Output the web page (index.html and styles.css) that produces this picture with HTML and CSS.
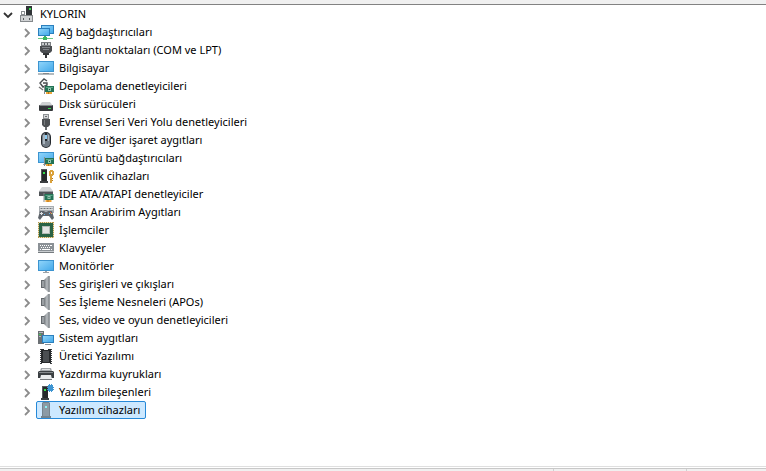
FILE: index.html
```html
<!DOCTYPE html>
<html lang="tr">

<head>
<meta charset="utf-8">
<title>Aygıt Yöneticisi</title>
<meta name="viewport" content="width=device-width, initial-scale=1">
<link rel="stylesheet" href="styles.css">
</head>

<body>

<!-- shared shapes -->
<svg class="defs" aria-hidden="true">
  <defs>
    <linearGradient id="screen" x1="0" y1="0" x2="1" y2="1">
      <stop offset="0" stop-color="#8fd4fa"/>
      <stop offset="1" stop-color="#45aaea"/>
    </linearGradient>
    <linearGradient id="metal" x1="0" y1="0" x2="1" y2="0">
      <stop offset="0" stop-color="#73787c"/>
      <stop offset=".6" stop-color="#b9bec2"/>
      <stop offset="1" stop-color="#83888c"/>
    </linearGradient>
    <symbol id="closed" viewBox="0 0 10 10"><path d="M3 1l4 4-4 4" fill="none" stroke="#8c8c8c" stroke-width="1.8"/></symbol>
    <symbol id="open" viewBox="0 0 10 10"><path d="M1 3l4 4 4-4" fill="none" stroke="#333" stroke-width="1.8"/></symbol>
    <symbol id="monitor" viewBox="0 0 16 16">
      <path d="M0 2h16v11H0z" fill="#3c94d0"/>
      <path d="M1 3h14v9H1z" fill="url(#screen)"/>
      <path d="M7 13h2v1H7zM5 14h6v1H5z" fill="#9da3a8"/>
    </symbol>
    <symbol id="card" viewBox="0 0 10 9">
      <path d="M0 0h1v9H0z" fill="#8a8d8f"/>
      <path d="M1 1h9v6H1z" fill="#237355"/>
      <path d="M2 2h7v1H2z" fill="#5aa587"/>
      <path d="M4 3h3v3H4z" fill="#8fc6ae"/>
      <path d="M5 4h1v1H5z" fill="#14503a"/>
      <path d="M2 7h6v2H2z" fill="#eda53a"/>
      <path d="M4 7h1v2H4z" fill="#b87719"/>
    </symbol>
    <symbol id="tower" viewBox="0 0 8 14">
      <path d="M1 0h6v12H1z" fill="#26292b"/>
      <path d="M1 0h6v1H1zM1 1h1v11H1z" fill="#55595c"/>
      <path d="M0 12h8v2H0z" fill="#3b3f42"/>
      <path d="M3 3h2v2H3z" fill="#36df4c"/>
    </symbol>
    <symbol id="speaker" viewBox="0 0 16 16">
      <path d="M3 4h4v8H3z" fill="#63686c"/>
      <path d="M4 5h2v6H4z" fill="#9a9fa3"/>
      <path d="M6 4l4-4h1v16h-1l-4-4z" fill="url(#metal)"/>
      <path d="M11 0h1v16h-1z" fill="#9a9fa3"/>
    </symbol>
  </defs>
</svg>

<div class="window">
  <div class="topbar"></div>

  <main>
    <ul class="tree">
      <li>
        <div class="row">
          <button class="toggle" aria-label="KYLORIN" aria-expanded="true"><svg><use href="#open"/></svg></button>
          <span class="item">
            <svg class="icon" viewBox="0 0 16 16">
              <path d="M7 0h6v9H7z" fill="#303437"/><path d="M10 2h2v2h-2z" fill="#36df4c"/>
              <path d="M2 5h4v4H2z" fill="#8a8e92"/><path d="M3 6h2v2H3z" fill="#fff"/>
              <path d="M1 9h13v7H1z" fill="#85898c"/>
              <path d="M2 10h11v5H2z" fill="#d0d2d4"/><path d="M4 12h1v2H4zM10 12h1v2h-1z" fill="#55595c"/>
            </svg>
            <span class="name">KYLORIN</span>
          </span>
        </div>

        <ul>
          <li class="row">
            <button class="toggle" aria-label="Ağ bağdaştırıcıları"><svg><use href="#closed"/></svg></button>
            <span class="item">
              <svg class="icon" viewBox="0 0 16 16">
                <path d="M3 1h13v9H3z" fill="#2b7fbd"/><path d="M4 2h11v7H4z" fill="url(#screen)"/>
                <path d="M0 4h12v8H0z" fill="#2b7fbd"/><path d="M1 5h10v6H1z" fill="url(#screen)"/>
                <path d="M0 14h15v1H0z" fill="#6fcb85"/><path d="M6 12h2v1H6zM5 13h4v3H5z" fill="#3cb460"/>
              </svg>
              <span class="name">Ağ bağdaştırıcıları</span>
            </span>
          </li>
          <li class="row">
            <button class="toggle" aria-label="Bağlantı noktaları (COM ve LPT)"><svg><use href="#closed"/></svg></button>
            <span class="item">
              <svg class="icon" viewBox="0 0 16 16">
                <path d="M3 0h10v4H3z" fill="#7b7f82"/><path d="M4 1h8v2H4z" fill="#c9ccce"/><path d="M6 1h1v2H6zM9 1h1v2H9z" fill="#55595c"/>
                <path d="M2 4h12v5l-2 2H4L2 9z" fill="#4a4d50"/><path d="M4 5h8v1H4zM5 7h6v1H5z" fill="#808488"/>
                <path d="M5 11h6v2H5zM7 13h2v3H7z" fill="#333638"/>
              </svg>
              <span class="name">Bağlantı noktaları (COM ve LPT)</span>
            </span>
          </li>
          <li class="row">
            <button class="toggle" aria-label="Bilgisayar"><svg><use href="#closed"/></svg></button>
            <span class="item">
              <svg class="icon" viewBox="0 0 16 16">
                <path d="M0 1h16v11H0z" fill="#3c94d0"/><path d="M1 2h14v9H1z" fill="url(#screen)"/>
                <path d="M0 13h16v2H0z" fill="#b4babe"/><path d="M5 13h6v1H5z" fill="#85898c"/>
              </svg>
              <span class="name">Bilgisayar</span>
            </span>
          </li>
          <li class="row">
            <button class="toggle" aria-label="Depolama denetleyicileri"><svg><use href="#closed"/></svg></button>
            <span class="item">
              <svg class="icon" viewBox="0 0 16 16">
                <path d="M9 3L6 1 2 5l3 4 4-2V5H5" fill="none" stroke="#484c4f" stroke-width="1.4"/>
                <path d="M1 9l4 3" stroke="#777" stroke-width="1.4"/>
                <use href="#card" x="6" y="7" width="10" height="9"/>
              </svg>
              <span class="name">Depolama denetleyicileri</span>
            </span>
          </li>
          <li class="row">
            <button class="toggle" aria-label="Disk sürücüleri"><svg><use href="#closed"/></svg></button>
            <span class="item">
              <svg class="icon" viewBox="0 0 16 16">
                <path d="M4 6h8l3 4H1z" fill="#cfd1d3"/><rect x="1" y="9" width="14" height="6" rx="1" fill="#34373a"/>
                <path d="M2 9h12v1H2z" fill="#85898c"/><path d="M10 12h3v1h-3z" fill="#36df4c"/>
              </svg>
              <span class="name">Disk sürücüleri</span>
            </span>
          </li>
          <li class="row">
            <button class="toggle" aria-label="Evrensel Seri Veri Yolu denetleyicileri"><svg><use href="#closed"/></svg></button>
            <span class="item">
              <svg class="icon" viewBox="0 0 16 16">
                <path d="M5 0h6v5H5z" fill="#8c9093"/><path d="M6 1h4v3H6z" fill="#d5d7d9"/><path d="M7 2h2v1H7z" fill="#6a6d70"/>
                <path d="M4 5h8v6l-2 2H6l-2-2z" fill="#4e5154"/><path d="M6 6h1v5H6z" fill="#777b7e"/>
                <path d="M7 13h2v3H7z" fill="#6a6d70"/>
              </svg>
              <span class="name">Evrensel Seri Veri Yolu denetleyicileri</span>
            </span>
          </li>
          <li class="row">
            <button class="toggle" aria-label="Fare ve diğer işaret aygıtları"><svg><use href="#closed"/></svg></button>
            <span class="item">
              <svg class="icon" viewBox="0 0 16 16">
                <rect x="3" y="0" width="10" height="16" rx="5" fill="#24282d"/>
                <rect x="4" y="1" width="8" height="14" rx="4" fill="#727c86"/>
                <path d="M5 3h2v9H5zM10 3h1v6h-1z" fill="#a9b4bd"/><path d="M7 1h2v8H7z" fill="#24282c"/><path d="M7 3h2v4H7z" fill="#8ccbf2"/>
              </svg>
              <span class="name">Fare ve diğer işaret aygıtları</span>
            </span>
          </li>
          <li class="row">
            <button class="toggle" aria-label="Görüntü bağdaştırıcıları"><svg><use href="#closed"/></svg></button>
            <span class="item">
              <svg class="icon" viewBox="0 0 16 16"><use href="#monitor"/><use href="#card" x="6" y="7" width="10" height="9"/></svg>
              <span class="name">Görüntü bağdaştırıcıları</span>
            </span>
          </li>
          <li class="row">
            <button class="toggle" aria-label="Güvenlik cihazları"><svg><use href="#closed"/></svg></button>
            <span class="item">
              <svg class="icon" viewBox="0 0 16 16">
                <use href="#tower" x="2" y="1" width="8" height="14"/>
                <path d="M11 3h1V2h3v1h1v4h-1v1h-1v7h-2V8h-1z" fill="#dba23b"/><path d="M13 4h1v2h-1z" fill="#fff"/>
                <path d="M14 10h1v1h-1zM14 12h1v1h-1z" fill="#b97b1a"/>
              </svg>
              <span class="name">Güvenlik cihazları</span>
            </span>
          </li>
          <li class="row">
            <button class="toggle" aria-label="IDE ATA/ATAPI denetleyiciler"><svg><use href="#closed"/></svg></button>
            <span class="item">
              <svg class="icon" viewBox="0 0 16 16">
                <path d="M4 1h8l3 4H1z" fill="#d3d5d7"/><path d="M1 5h14v5H1z" fill="#4f5356"/><path d="M1 5h14v1H1z" fill="#999da0"/>
                <use href="#card" x="5" y="7" width="11" height="9"/>
              </svg>
              <span class="name">IDE ATA/ATAPI denetleyiciler</span>
            </span>
          </li>
          <li class="row">
            <button class="toggle" aria-label="İnsan Arabirim Aygıtları"><svg><use href="#closed"/></svg></button>
            <span class="item">
              <svg class="icon" viewBox="0 0 16 16">
                <path d="M1 2h15v7H1z" fill="#a8adb1"/>
                <path d="M2 3h13v1H2zM2 5h13v1H2z" fill="#d9dcde"/><path d="M3 4h1v1H3zM6 4h1v1H6zM9 4h1v1H9zM12 4h1v1h-1z" fill="#70757a"/>
                <path d="M2 7h4l1 1h2l1-1h4l2 7-2 2-3-4H5l-3 4-2-2z" fill="#5f656b"/>
                <path d="M2 9h3v1H2zM3 8h1v3H3z" fill="#dfe2e4"/><path d="M12 8h1v1h-1z" fill="#e95d4e"/><path d="M11 9h1v1h-1zM6 10h1v1H6z" fill="#64b5e7"/><path d="M13 9h1v1h-1z" fill="#e8b745"/>
              </svg>
              <span class="name">İnsan Arabirim Aygıtları</span>
            </span>
          </li>
          <li class="row">
            <button class="toggle" aria-label="İşlemciler"><svg><use href="#closed"/></svg></button>
            <span class="item">
              <svg class="icon" viewBox="0 0 16 16">
                <path d="M0 0h16v16H0z" fill="#e8dcb4"/>
                <path d="M0 .5h16M0 15.500h16M.5 0v16M15.500 0v16" stroke="#b3964a" stroke-dasharray="1 1"/>
                <path d="M1 1h14v14H1z" fill="#2a6345"/><path d="M4 4h8v8H4z" fill="#b3bbb6"/><path d="M5 5h6v6H5z" fill="#e2e5e3"/>
              </svg>
              <span class="name">İşlemciler</span>
            </span>
          </li>
          <li class="row">
            <button class="toggle" aria-label="Klavyeler"><svg><use href="#closed"/></svg></button>
            <span class="item">
              <svg class="icon" viewBox="0 0 16 16">
                <path d="M0 3h16v10H0z" fill="#8b9196"/>
                <path d="M2 5h1v1H2zM4 5h1v1H4zM6 5h1v1H6zM8 5h1v1H8zM10 5h1v1h-1zM12 5h2v1h-2zM3 7h1v1H3zM5 7h1v1H5zM7 7h1v1H7zM9 7h1v1H9zM11 7h1v1h-1zM2 9h1v1H2zM4 9h8v1H4zM13 9h1v1h-1z" fill="#fff"/>
                <path d="M0 11h16v2H0z" fill="#c9cdd0"/><path d="M0 12h16v1H0z" fill="#767b7f"/>
              </svg>
              <span class="name">Klavyeler</span>
            </span>
          </li>
          <li class="row">
            <button class="toggle" aria-label="Monitörler"><svg><use href="#closed"/></svg></button>
            <span class="item">
              <svg class="icon" viewBox="0 0 16 16"><use href="#monitor"/></svg>
              <span class="name">Monitörler</span>
            </span>
          </li>
          <li class="row">
            <button class="toggle" aria-label="Ses girişleri ve çıkışları"><svg><use href="#closed"/></svg></button>
            <span class="item">
              <svg class="icon" viewBox="0 0 16 16"><use href="#speaker"/></svg>
              <span class="name">Ses girişleri ve çıkışları</span>
            </span>
          </li>
          <li class="row">
            <button class="toggle" aria-label="Ses İşleme Nesneleri (APOs)"><svg><use href="#closed"/></svg></button>
            <span class="item">
              <svg class="icon" viewBox="0 0 16 16"><use href="#speaker"/></svg>
              <span class="name">Ses İşleme Nesneleri (APOs)</span>
            </span>
          </li>
          <li class="row">
            <button class="toggle" aria-label="Ses, video ve oyun denetleyicileri"><svg><use href="#closed"/></svg></button>
            <span class="item">
              <svg class="icon" viewBox="0 0 16 16"><use href="#speaker"/></svg>
              <span class="name">Ses, video ve oyun denetleyicileri</span>
            </span>
          </li>
          <li class="row">
            <button class="toggle" aria-label="Sistem aygıtları"><svg><use href="#closed"/></svg></button>
            <span class="item">
              <svg class="icon" viewBox="0 0 16 16">
                <path d="M0 1h6v13H0z" fill="#6b7074"/><path d="M1 2h4v1H1zM1 6h2v1H1z" fill="#b5babd"/><path d="M1 4h2v1H1z" fill="#36df4c"/>
                <path d="M4 5h12v8H4z" fill="#2b7fbd"/><path d="M5 6h10v6H5z" fill="url(#screen)"/>
                <path d="M7 14h6v1H7z" fill="#8d9398"/>
              </svg>
              <span class="name">Sistem aygıtları</span>
            </span>
          </li>
          <li class="row">
            <button class="toggle" aria-label="Üretici Yazılımı"><svg><use href="#closed"/></svg></button>
            <span class="item">
              <svg class="icon" viewBox="0 0 16 16">
                <path d="M3 1v15M13 1v15" stroke="#3c4043" stroke-width="2" stroke-dasharray="1 1"/>
                <path d="M3 1h3v1h4V1h3v14H3z" fill="#26292b"/><path d="M5 3h6v11H5z" fill="#4b4f52"/>
              </svg>
              <span class="name">Üretici Yazılımı</span>
            </span>
          </li>
          <li class="row">
            <button class="toggle" aria-label="Yazdırma kuyrukları"><svg><use href="#closed"/></svg></button>
            <span class="item">
              <svg class="icon" viewBox="0 0 16 16">
                <path d="M3 2h10l1 3H2z" fill="#a3a7aa"/><path d="M4 3h8v1H4z" fill="#e2e4e5"/><path d="M1 5h14l1 1v6H0V6z" fill="#3b3f42"/>
                <path d="M1 6h14v1H1z" fill="#85898c"/><path d="M3 9h10l1 4H2z" fill="#e9ebec"/><path d="M2 13h12v1H2z" fill="#777b7e"/>
              </svg>
              <span class="name">Yazdırma kuyrukları</span>
            </span>
          </li>
          <li class="row">
            <button class="toggle" aria-label="Yazılım bileşenleri"><svg><use href="#closed"/></svg></button>
            <span class="item">
              <svg class="icon" viewBox="0 0 16 16">
                <use href="#tower" x="3" y="2" width="8" height="14"/>
                <path d="M10 1h1V0h1v1h1V0h1v1h1v2h1v1h-1v1h1v1h-1v1h-1v1h-1V7h-1v1h-1V7h-1V6H9V5h1V4H9V3h1z" fill="#3d94d1"/>
              </svg>
              <span class="name">Yazılım bileşenleri</span>
            </span>
          </li>
          <li class="row">
            <button class="toggle" aria-label="Yazılım cihazları"><svg><use href="#closed"/></svg></button>
            <span class="item selected">
              <svg class="icon" viewBox="0 0 16 16">
                <path d="M5 0h6l1 1v13h1v2H3v-2h1V1z" fill="#75848f"/><path d="M5 1h6v13H5z" fill="#8c9ba6"/>
                <path d="M7 4h2v2H7z" fill="#8cf0f4"/>
              </svg>
              <span class="name">Yazılım cihazları</span>
            </span>
          </li>
        </ul>
      </li>
    </ul>
  </main>

  <footer class="statusbar">
    <div class="pane wide"></div>
    <div class="pane"></div>
    <div class="end"></div>
  </footer>
</div>

</body>

</html>
```

FILE: styles.css
```css
* {
  box-sizing: border-box;
}

body {
  margin: 0;
  background: #fff;
  color: #000;
  font: 11px/18px "Noto Sans", "Open Sans", sans-serif;
}

.defs {
  position: absolute;
  width: 0;
  height: 0;
}

.window {
  display: flex;
  flex-direction: column;
  min-height: 100vh;
}

.topbar {
  height: 5px;
  background: #f0f0f0;
  border-bottom: 1px solid #828282;
}

main {
  flex: 1;
}

ul {
  margin: 0;
  padding: 0;
  list-style: none;
}

.tree ul {
  padding-left: 19px;
}

.row {
  display: flex;
  align-items: center;
  height: 18px;
}

.toggle {
  display: flex;
  width: 14px;
  margin: 0 0 0 3px;
  padding: 2px 0 0;
  border: none;
  background: none;
}

.toggle svg {
  width: 10px;
  height: 10px;
}

.item {
  display: flex;
  align-items: center;
  gap: 5px;
  height: 18px;
  padding: 0 5px 0 1px;
  border: 1px solid transparent;
  border-radius: 2px;
  white-space: nowrap;
}

.icon {
  width: 16px;
  height: 16px;
}

.selected {
  background: #cce8ff;
  border-color: #2689d8;
}

.statusbar {
  display: flex;
  height: 5px;
  border-top: 1px solid #dfdfdf;
  background: #f0f0f0;
  box-shadow: inset 0 1px #fff, inset 0 2px #c8c8c8;
}

.pane {
  width: 133px;
  margin-top: 2px;
  border-right: 1px solid #d0d0d0;
}

.wide {
  flex: 1;
}

.end {
  width: 79px;
}
```
